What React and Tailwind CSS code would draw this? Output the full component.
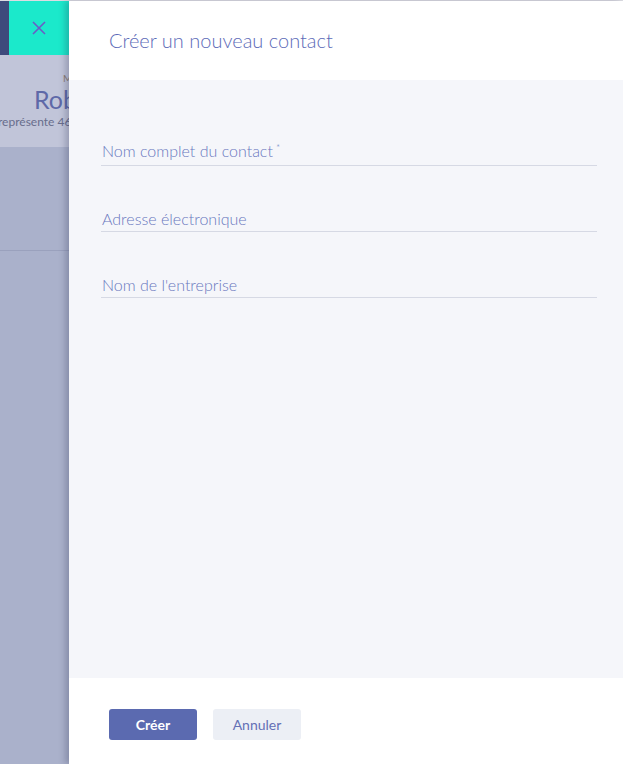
export default function App() {
  const fields = [
    { label: "Nom complet du contact", required: true },
    { label: "Adresse électronique" },
    { label: "Nom de l'entreprise" },
  ]

  return (
    <div className="flex h-[764px] w-full flex-col overflow-hidden bg-white font-['Lato',sans-serif]">
      <div className="h-px w-full shrink-0 bg-[#dcdce2]" />
      <div className="flex min-h-0 flex-1">
        {/* page behind the drawer, dimmed */}
        <div className="flex w-[69px] shrink-0 flex-col overflow-hidden">
          <div className="flex h-[54px] shrink-0">
            <div className="w-[9px] bg-[#3e4a7c]" />
            <button className="flex flex-1 items-center justify-center bg-[#1be9cb]">
              <svg width="16" height="16" viewBox="0 0 16 16" fill="none">
                <path d="M2 2L14 14M14 2L2 14" stroke="#6a5cc6" strokeWidth="1.6" />
              </svg>
            </button>
          </div>
          <div className="flex h-[92px] shrink-0 flex-col whitespace-nowrap bg-[#c1c5d9] pt-[17px]">
            <span className="pl-[63px] text-[10px] leading-[12px] text-[#8b7d72]">M</span>
            <span className="pl-[34px] text-[25px] leading-[30px] text-[#5e69a8]">Robert</span>
            <span className="ml-[-2px] text-[12px] leading-[16px] text-[#686d8c]">représente 46 %</span>
          </div>
          <div className="flex flex-1 flex-col bg-[#aab1cb]">
            <div className="h-[103px]" />
            <div className="h-px bg-[#9aa1bd]" />
          </div>
        </div>

        {/* drawer */}
        <div className="relative flex flex-1 flex-col shadow-[-4px_0_6px_rgba(40,45,80,0.25)]">
          <div className="flex h-[79px] shrink-0 items-center bg-white pb-[2px] pl-[40px]">
            <h1 className="text-[20px] font-light text-[#5d6bb8]">Créer un nouveau contact</h1>
          </div>
          <div className="flex flex-1 flex-col gap-[28px] bg-[#f5f6fa] pl-[32px] pr-[26px] pt-[48px]">
            {fields.map((f) => (
              <div key={f.label} className="flex h-[38px] flex-col justify-end border-b border-[#d6d9e4] pb-[2px]">
                <span className="pl-px text-[16px] font-light leading-[20px] text-[#6877be]">
                  {f.label}
                  {f.required && <span className="relative top-[-6px] ml-[3px] text-[10px]">*</span>}
                </span>
              </div>
            ))}
          </div>
          <div className="flex h-[86px] shrink-0 items-start gap-[16px] bg-white pl-[40px] pt-[31px]">
            <button className="h-[31px] w-[88px] rounded-[3px] bg-[#5b6ab0] text-[14px] font-bold text-white">
              Créer
            </button>
            <button className="h-[31px] w-[88px] rounded-[3px] bg-[#eceff5] text-[14px] text-[#6470b6]">
              Annuler
            </button>
          </div>
        </div>
      </div>
    </div>
  )
}
